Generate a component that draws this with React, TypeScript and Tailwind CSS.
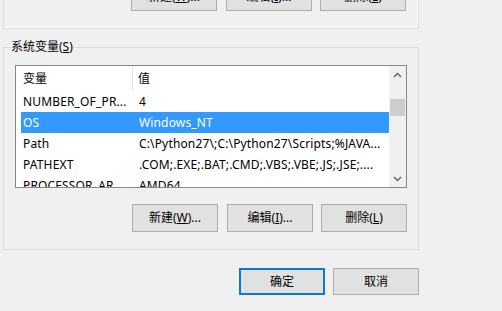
import React from "react";

const font = "font-['Microsoft_YaHei_UI','Noto_Sans','Noto_Sans_CJK_SC',sans-serif]";

function Btn({ children, def = false, h = "h-[28px]" }: { children: React.ReactNode; def?: boolean; h?: string }) {
  return (
    <div
      className={`w-[86px] ${h} flex items-center justify-center bg-[#e1e1e1] text-[12px] text-black ${
        def ? "border-2 border-[#0a78d4]" : "border border-[#adadad]"
      }`}
    >
      {children}
    </div>
  );
}

function Up() {
  return (
    <svg width="9" height="6" viewBox="0 0 9 6">
      <path d="M1 5 L4.5 1.5 L8 5" fill="none" stroke="#606060" strokeWidth="1.4" />
    </svg>
  );
}
function Down() {
  return (
    <svg width="9" height="6" viewBox="0 0 9 6">
      <path d="M1 1 L4.5 4.5 L8 1" fill="none" stroke="#606060" strokeWidth="1.4" />
    </svg>
  );
}

const rows = [
  ["NUMBER_OF_PR...", "4"],
  ["OS", "Windows_NT"],
  ["Path", "C:\\Python27\\;C:\\Python27\\Scripts;%JAVA..."],
  ["PATHEXT", ".COM;.EXE;.BAT;.CMD;.VBS;.VBE;.JS;.JSE;...."],
  ["PROCESSOR_AR...", "AMD64"],
];

export default function App() {
  return (
    <div className={`w-[502px] h-[311px] bg-[#f0f0f0] overflow-hidden pl-[3px] flex flex-col ${font} text-[12px] leading-[16px] text-black`}>
      {/* top group remnant */}
      <div className="w-[416px] mt-[-17px] border-x border-b border-[#dcdcdc] shadow-[inset_-1px_-1px_0_#fff] pb-[17px] pr-[12px] flex justify-end">
        <Btn>新建(<u>W</u>)...</Btn>
        <div className="ml-[9px]"><Btn>编辑(<u>I</u>)...</Btn></div>
        <div className="ml-[8px]"><Btn>删除(<u>L</u>)</Btn></div>
      </div>

      <fieldset className="w-[416px] mt-[10px] border border-[#dcdcdc] pb-[17px]">
        <legend className="ml-[6px] px-[1px] leading-[16px]">
          系统变量(<u>S</u>)
        </legend>
        <div className="ml-[11px] mt-[10px] w-[392px] h-[123px] border border-[#828790] flex bg-white">
          <div className="flex-1 flex flex-col overflow-hidden">
            <div className="h-[25px] flex items-center shrink-0">
              <div className="w-[117px] pl-[7px] h-full flex items-center border-r border-[#e5e5e5]">变量</div>
              <div className="pl-[5px]">值</div>
            </div>
            {rows.map(([a, b], i) => (
              <div
                key={i}
                className={`ml-[5px] h-[21px] shrink-0 flex items-center whitespace-nowrap tracking-[0.15px] ${
                  i === 1 ? "bg-[#3399ff] text-white" : ""
                }`}
              >
                <div className="w-[112px] pl-[2px] overflow-hidden">{a}</div>
                <div className="pl-[6px] overflow-hidden">{b}</div>
              </div>
            ))}
          </div>
          <div className="w-[17px] bg-[#f0f0f0] flex flex-col">
            <div className="h-[17px] flex items-center justify-center"><Up /></div>
            <div className="h-[16px]" />
            <div className="h-[17px] mx-[1px] bg-[#cdcdcd]" />
            <div className="flex-1" />
            <div className="h-[17px] flex items-center justify-center"><Down /></div>
          </div>
        </div>
        <div className="mt-[16px] pr-[11px] flex justify-end">
          <Btn>新建(<u>W</u>)...</Btn>
          <div className="ml-[9px]"><Btn>编辑(<u>I</u>)...</Btn></div>
          <div className="ml-[8px]"><Btn>删除(<u>L</u>)</Btn></div>
        </div>
      </fieldset>

      <div className="w-[416px] mt-[18px] flex justify-end">
        <Btn def h="h-[27px]">确定</Btn>
        <div className="ml-[8px]"><Btn h="h-[27px]">取消</Btn></div>
      </div>
    </div>
  );
}
